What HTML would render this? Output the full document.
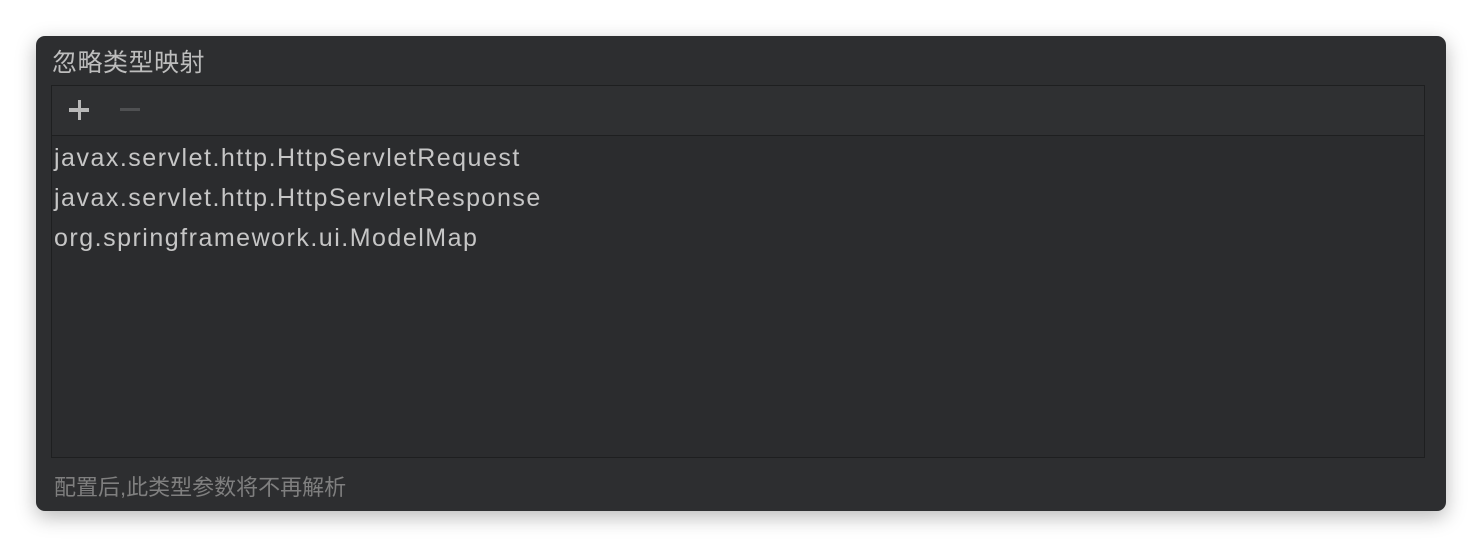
<!DOCTYPE html>
<html><head><meta charset="utf-8"><style>
html,body{margin:0;padding:0;background:#fff;width:1482px;height:548px;overflow:hidden}
.panel{position:absolute;left:36px;top:36px;width:1410px;height:475px;background:#2d2e30;border-radius:9px;box-shadow:0 6px 20px rgba(0,0,0,0.28);font-family:"Liberation Sans","Noto Sans CJK SC",sans-serif}
.title{position:absolute;left:16px;top:12px;font-size:25px;letter-spacing:0.5px;color:#bdbdbd;line-height:30px}
.box{position:absolute;left:15px;top:49px;width:1372px;height:371px;border:1px solid #1e1f20;background:#2b2c2e}
.tb{height:49px;border-bottom:1px solid #1e1f20;background:#2f3032;position:relative}
.plus{position:absolute;left:17px;top:14px;width:20px;height:20px}
.plus:before{content:"";position:absolute;left:0;top:8px;width:20px;height:3.5px;background:#b8b8b8}
.plus:after{content:"";position:absolute;left:8.5px;top:0;width:3.5px;height:20px;background:#b8b8b8}
.minus{position:absolute;left:68px;top:22px;width:20px;height:3px;background:#4f5052}
.item{font-size:25px;letter-spacing:1.5px;color:#c6c6c6;line-height:40px;padding-left:2px}
.list{padding-top:2px}
.foot{position:absolute;left:18px;top:438px;font-size:22px;color:#7f7f7f;line-height:28px}
</style></head><body>
<div class="panel">
<div class="title">忽略类型映射</div>
<div class="box">
<div class="tb"><div class="plus"></div><div class="minus"></div></div>
<div class="list">
<div class="item">javax.servlet.http.HttpServletRequest</div>
<div class="item">javax.servlet.http.HttpServletResponse</div>
<div class="item">org.springframework.ui.ModelMap</div>
</div>
</div>
<div class="foot">配置后,此类型参数将不再解析</div>
</div>
</body></html>
